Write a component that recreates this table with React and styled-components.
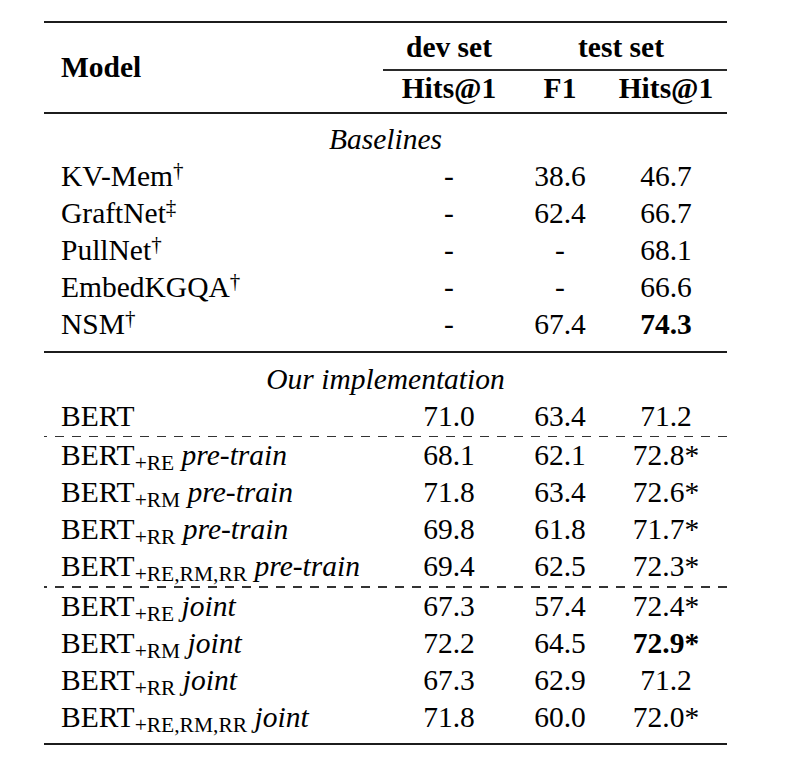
import React from "react";
import styled, { createGlobalStyle } from "styled-components";

const COLS = "339px 132px 90px 122px";

const GlobalStyle = createGlobalStyle`
  html, body { margin: 0; padding: 0; background: #fff; }
  body {
    font-family: "Liberation Serif", "Times New Roman", serif;
    color: #000;
  }
`;

const Page = styled.div`
  padding: 21px 0 20px 44px;
`;

const Table = styled.div`
  width: 683px;
  font-size: 29.5px;
`;

const Rule = styled.div`
  height: ${(p) => p.$h}px;
  background: #1c1c1c;
  margin: ${(p) => p.$m};
`;

const DashRule = styled.div`
  height: 1.5px;
  margin-top: 1px;
  background: repeating-linear-gradient(
    to right,
    #333 0 3px,
    transparent 3px 11px,
    #333 11px 17px
  );
`;

const Header = styled.div`
  display: grid;
  grid-template-columns: ${COLS};
  grid-template-rows: 36px 5.5px 34px;
  margin-top: 6px;
  font-weight: bold;
  line-height: 34px;
`;

const ModelCell = styled.div`
  grid-column: 1;
  grid-row: 1 / 4;
  align-self: center;
  padding-left: 17px;
`;

const HeadCell = styled.div`
  grid-column: ${(p) => p.$col};
  grid-row: ${(p) => p.$row};
  text-align: center;
  align-self: center;
`;

const CMidRule = styled.div`
  grid-column: 2 / 5;
  grid-row: 2;
  align-self: end;
  height: 1.5px;
  background: #2a2a2a;
`;

const Row = styled.div`
  display: grid;
  grid-template-columns: ${COLS};
  height: 37px;
  line-height: 37px;
  align-items: center;
`;

const NameCell = styled.div`
  padding-left: 17px;
  white-space: nowrap;
`;

const NumCell = styled.div`
  text-align: center;
  font-weight: ${(p) => (p.$bold ? "bold" : "normal")};
  white-space: nowrap;
`;

const Section = styled.div`
  height: 37px;
  line-height: 37px;
  text-align: center;
  font-style: italic;
`;

const Sub = styled.sub`
  font-size: 21.5px;
  vertical-align: -5px;
  line-height: 0;
`;

const Sup = styled.sup`
  font-size: 21px;
  vertical-align: 9px;
  line-height: 0;
`;

const Method = styled.i`
  font-style: italic;
`;

const baselines = [
  { name: "KV-Mem", mark: "†", v: ["-", "38.6", "46.7"] },
  { name: "GraftNet", mark: "‡", v: ["-", "62.4", "66.7"] },
  { name: "PullNet", mark: "†", v: ["-", "-", "68.1"] },
  { name: "EmbedKGQA", mark: "†", v: ["-", "-", "66.6"] },
  { name: "NSM", mark: "†", v: ["-", "67.4", "74.3"], bold: 2 },
];

const pretrain = [
  { sub: "+RE", v: ["68.1", "62.1", "72.8*"] },
  { sub: "+RM", v: ["71.8", "63.4", "72.6*"] },
  { sub: "+RR", v: ["69.8", "61.8", "71.7*"] },
  { sub: "+RE,RM,RR", v: ["69.4", "62.5", "72.3*"] },
];

const joint = [
  { sub: "+RE", v: ["67.3", "57.4", "72.4*"] },
  { sub: "+RM", v: ["72.2", "64.5", "72.9*"], bold: 2 },
  { sub: "+RR", v: ["67.3", "62.9", "71.2"] },
  { sub: "+RE,RM,RR", v: ["71.8", "60.0", "72.0*"] },
];

function Values({ v, bold }) {
  return v.map((x, i) => (
    <NumCell key={i} $bold={bold === i}>
      {x}
    </NumCell>
  ));
}

function BertRow({ sub, method, v, bold }) {
  return (
    <Row>
      <NameCell>
        BERT<Sub>{sub}</Sub> <Method>{method}</Method>
      </NameCell>
      <Values v={v} bold={bold} />
    </Row>
  );
}

export default function App() {
  return (
    <>
      <GlobalStyle />
      <Page>
        <Table>
          <Rule $h={2} $m="0" />
          <Header>
            <ModelCell>Model</ModelCell>
            <HeadCell $col="2" $row="1">dev set</HeadCell>
            <HeadCell $col="3 / 5" $row="1">test set</HeadCell>
            <CMidRule />
            <HeadCell $col="2" $row="3">Hits@1</HeadCell>
            <HeadCell $col="3" $row="3">F1</HeadCell>
            <HeadCell $col="4" $row="3">Hits@1</HeadCell>
          </Header>
          <Rule $h={2} $m="7px 0" />
          <Section>Baselines</Section>
          {baselines.map((r) => (
            <Row key={r.name}>
              <NameCell>
                {r.name}
                <Sup>{r.mark}</Sup>
              </NameCell>
              <Values v={r.v} bold={r.bold} />
            </Row>
          ))}
          <Rule $h={2} $m="8px 0" />
          <Section>Our implementation</Section>
          <Row>
            <NameCell>BERT</NameCell>
            <Values v={["71.0", "63.4", "71.2"]} />
          </Row>
          <DashRule />
          {pretrain.map((r) => (
            <BertRow key={r.sub} sub={r.sub} method="pre-train" v={r.v} />
          ))}
          <DashRule />
          {joint.map((r) => (
            <BertRow key={r.sub} sub={r.sub} method="joint" v={r.v} bold={r.bold} />
          ))}
          <Rule $h={2.5} $m="7px 0 0" />
        </Table>
      </Page>
    </>
  );
}
